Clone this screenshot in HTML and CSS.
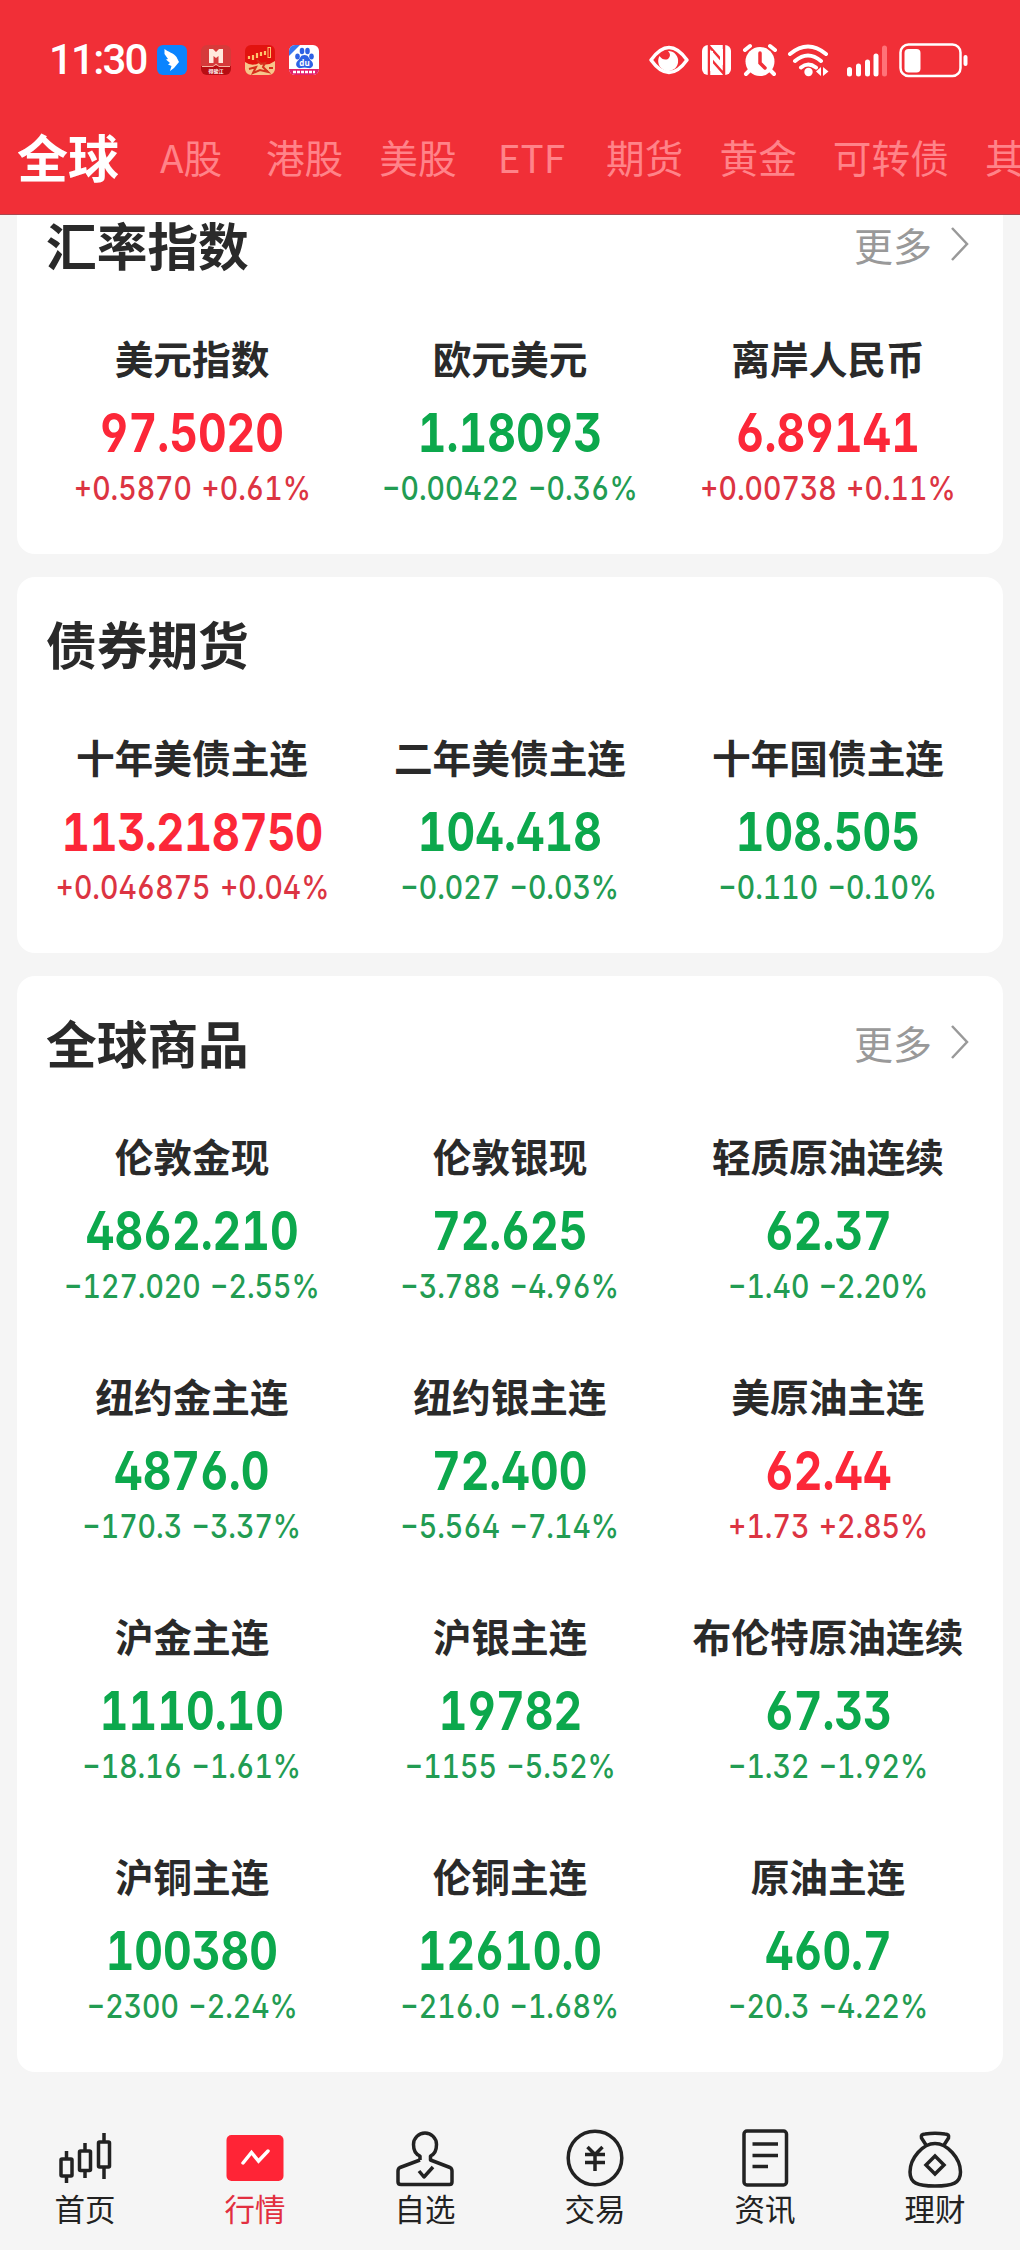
FILE: index.html
```html
<!DOCTYPE html>
<html lang="zh-CN">
<head>
<meta charset="utf-8">
<title>行情</title>
<link rel="stylesheet" href="styles.css">
</head>
<body>
<div class="app">
<header class="top">
  <div class="status">
    <span class="clock">11:30</span>
    <div class="apps">
      <svg width="30" height="30" viewBox="0 0 30 30"><rect width="30" height="30" rx="6" fill="#0a84ff"/><path d="M7.500 4C11 7 17 8 19.500 12L22 17L17 23L13 26L14.500 21L11 19.500L13 18L9 14.500L11 14L7.500 9Z" fill="#fff"/></svg>
      <svg width="30" height="30" viewBox="0 0 30 30"><rect width="30" height="30" rx="6" fill="#d63a3a"/><path d="M0 21H30V24A6 6 0 0 1 24 30H6A6 6 0 0 1 0 24Z" fill="#b80d12"/><path d="M8 4H12L15 7L18 4H22V18H17.500V11L15 13L12.500 11V18H8Z" fill="#ffe9dc"/><path d="M1 21.500H12L15 19L18 21.500H29" stroke="#f6b4a0" fill="none"/><text x="15" y="28.300" class="app-text">得骏江</text></svg>
      <svg width="30" height="30" viewBox="0 0 30 30"><rect width="30" height="30" rx="6" fill="#e2130f"/><path d="M0 17Q7 22 14 18Q22 22 30 16V24A6 6 0 0 1 24 30H6A6 6 0 0 1 0 24Z" fill="#f7c58b"/><path d="M4 14V11M8 15V10M12 13V8M16 11V7M20 10V6" stroke="#ffc36c" stroke-width="2.200"/><rect x="23" y="2.500" width="2.500" height="10" fill="none" stroke="#ffc36c"/><path d="M12 15L16 19L20 18L18 22L23 27L15 25L8 28L11 22L4 24M24 23H28" stroke="#d6301d" stroke-width="2" fill="none"/></svg>
      <svg width="30" height="30" viewBox="0 0 30 30"><rect width="30" height="30" rx="6" fill="#fff"/><path d="M0 11V6A6 6 0 0 1 6 0H11Z" fill="#3978ef"/><path d="M0 24H30A6 6 0 0 1 24 30H6A6 6 0 0 1 0 24Z" fill="#e3216b"/><g fill="#2e62e4"><ellipse cx="8.500" cy="11.500" rx="2.300" ry="3"/><ellipse cx="13" cy="6" rx="2.300" ry="3.200"/><ellipse cx="18.500" cy="6" rx="2.300" ry="3.200"/><ellipse cx="22.500" cy="11.500" rx="2.300" ry="3"/><path d="M15.500 10C11 10 12 13 8.500 16C5 20 9 24 12 23Q15.500 22 19 23C23 24 26 20 22.500 16C19 13 20 10 15.500 10Z"/></g><text x="15.500" y="21" class="du-text">du</text><path d="M4 27H26" stroke="#fff" stroke-width="2.500" stroke-dasharray="3 1"/></svg>
    </div>
    <div class="signals">
      <svg width="344" height="36" viewBox="0 0 344 36" fill="none" stroke="#fff">
        <path d="M2 18Q20-7 38 18Q20 43 2 18Z" transform="translate(1 0)" stroke-width="3.500" stroke-linejoin="round"/>
        <path d="M20 9A10 10 0 1 1 11.500 14Q15 19 20 17Q24 13 20 9Z" fill="#fff" stroke="none"/>
        <rect x="54" y="3" width="29" height="30" rx="6" fill="#fff" stroke="none"/>
        <path d="M61 33V3M76 33V3M61 4L76 21M61 15L76 32" stroke="#f12f37" stroke-width="2.500"/><path d="M63.500 9V29M73.500 7V23" stroke="#fff" stroke-width="3"/>
        <circle cx="112" cy="19.500" r="14.500" fill="#fff" stroke="none"/>
        <path d="M97 8L102 4M127 8L122 4M98 32L102 28M126 32L122 28" stroke-width="4" stroke-linecap="round"/>
        <path d="M112 11V21L117 26" stroke="#f12f37" stroke-width="3.500" stroke-linecap="round"/>
        <path d="M142 12Q160-3 178 12M147 19Q160 8 173 19M153 25.500Q160 19.500 168 25.500" stroke-width="4" stroke-linecap="round"/>
        <circle cx="160.500" cy="30" r="4.200" fill="#fff" stroke="none"/><path d="M173 25V34L168 29.500ZM175 25V34L180.500 29.500Z" fill="#fff" stroke="none"/>
        <path d="M201.500 27.500V32M210.500 24V32M219.500 20V32M228 14V32" stroke-width="5" stroke-linecap="round"/><path d="M236.500 6V32" stroke="#ff7278" stroke-width="5" stroke-linecap="round"/>
        <rect x="252.500" y="2.500" width="60" height="31.500" rx="8" stroke-width="2.500"/>
        <rect x="256.500" y="7" width="16" height="23.500" rx="4" fill="#fff" stroke="none"/><path d="M317.500 15V22" stroke-width="4" stroke-linecap="round"/>
      </svg>
    </div>
  </div>
  <nav class="tabs">
    <span class="tab active">全球</span><span class="tab">A股</span><span class="tab">港股</span><span class="tab">美股</span><span class="tab">ETF</span><span class="tab">期货</span><span class="tab">黄金</span><span class="tab">可转债</span><span class="tab">其他</span>
  </nav>
</header>
<main class="content">
  <section class="card scrolled">
    <div class="head"><h2>汇率指数</h2><span class="more">更多<svg width="20" height="36" viewBox="0 0 20 36"><path d="M2 2L17 18L2 34" fill="none" stroke="#999" stroke-width="2.500"/></svg></span></div>
    <div class="grid">
      <div class="quote up"><h3>美元指数</h3><b>97.5020</b><p>+0.5870 +0.61%</p></div>
      <div class="quote down"><h3>欧元美元</h3><b>1.18093</b><p>−0.00422 −0.36%</p></div>
      <div class="quote up"><h3>离岸人民币</h3><b>6.89141</b><p>+0.00738 +0.11%</p></div>
    </div>
  </section>
  <section class="card">
    <div class="head"><h2>债券期货</h2></div>
    <div class="grid">
      <div class="quote up"><h3>十年美债主连</h3><b class="long">113.218750</b><p>+0.046875 +0.04%</p></div>
      <div class="quote down"><h3>二年美债主连</h3><b>104.418</b><p>−0.027 −0.03%</p></div>
      <div class="quote down"><h3>十年国债主连</h3><b>108.505</b><p>−0.110 −0.10%</p></div>
    </div>
  </section>
  <section class="card">
    <div class="head"><h2>全球商品</h2><span class="more">更多<svg width="20" height="36" viewBox="0 0 20 36"><path d="M2 2L17 18L2 34" fill="none" stroke="#999" stroke-width="2.500"/></svg></span></div>
    <div class="grid">
      <div class="quote down"><h3>伦敦金现</h3><b>4862.210</b><p>−127.020 −2.55%</p></div>
      <div class="quote down"><h3>伦敦银现</h3><b>72.625</b><p>−3.788 −4.96%</p></div>
      <div class="quote down"><h3>轻质原油连续</h3><b>62.37</b><p>−1.40 −2.20%</p></div>
      <div class="quote down"><h3>纽约金主连</h3><b>4876.0</b><p>−170.3 −3.37%</p></div>
      <div class="quote down"><h3>纽约银主连</h3><b>72.400</b><p>−5.564 −7.14%</p></div>
      <div class="quote up"><h3>美原油主连</h3><b>62.44</b><p>+1.73 +2.85%</p></div>
      <div class="quote down"><h3>沪金主连</h3><b>1110.10</b><p>−18.16 −1.61%</p></div>
      <div class="quote down"><h3>沪银主连</h3><b>19782</b><p>−1155 −5.52%</p></div>
      <div class="quote down"><h3>布伦特原油连续</h3><b>67.33</b><p>−1.32 −1.92%</p></div>
      <div class="quote down"><h3>沪铜主连</h3><b>100380</b><p>−2300 −2.24%</p></div>
      <div class="quote down"><h3>伦铜主连</h3><b>12610.0</b><p>−216.0 −1.68%</p></div>
      <div class="quote down"><h3>原油主连</h3><b>460.7</b><p>−20.3 −4.22%</p></div>
    </div>
  </section>
</main>
<nav class="bottom">
  <div class="item"><svg viewBox="0 0 60 60"><path d="M11.500 23V31M11.500 48V55M30 15V23M30 43V50M49 5V14M49 39V51"/><rect x="6" y="31" width="11" height="17" rx="1"/><rect x="24.500" y="23" width="11" height="19.500" rx="1"/><rect x="43.500" y="14" width="11" height="25" rx="1"/></svg>首页</div>
  <div class="item active"><svg viewBox="0 0 60 60"><rect x="1.500" y="7" width="57" height="46" rx="5" fill="#ff2436" stroke="none"/><path d="M18 35L26.500 24.500L33.500 33L43 23" stroke="#fff" stroke-linecap="round"/></svg>行情</div>
  <div class="item"><svg viewBox="0 0 60 60"><path d="M25 32V28C20 26 18.500 21 18.500 16.500A11.500 11.500 0 0 1 41.500 16.500C41.500 21 40 26 35.500 28V32L55 39.500Q57 40.500 57 43V54Q57 56.500 54.500 56.500H6Q3 56.500 3 54V43Q3 40.500 5 39.500L25 32M24 43L29 49L38 39" stroke-linejoin="round"/></svg>自选</div>
  <div class="item"><svg viewBox="0 0 60 60"><circle cx="30" cy="30" r="26.800"/><path d="M22.500 19L30 26.500L37.500 19M20 26.500H40M20 34.500H40M30 26V43"/></svg>交易</div>
  <div class="item"><svg viewBox="0 0 60 60"><rect x="9" y="3" width="42.500" height="54" rx="3"/><path d="M17.500 16H43M17.500 27.500H43M17.500 38.500H33"/></svg>资讯</div>
  <div class="item"><svg viewBox="0 0 60 60"><path d="M21 17L16.500 10Q15.500 6 20 6Q30 4.500 40 6Q44.500 6 43.500 10L39 17M30 15.500C42 15.500 55.500 30 55.500 44C55.500 55 48 58 30 58C12 58 5 55 5 44C5 30 18 15.500 30 15.500ZM30 28L39 37L30 46L21 37Z"/></svg>理财</div>
</nav>
</div>
</body>
</html>
```
FILE: styles.css
```css
* { box-sizing: border-box; }
body { margin: 0; background: #f5f5f5; color: #2a2a2a; font-family: "Noto Sans CJK SC", sans-serif; }
h2, h3, p { margin: 0; }
svg { display: block; flex: none; }
.app { width: 1020px; height: 2250px; display: flex; flex-direction: column; overflow: hidden; }

.top { flex: none; height: 215px; background: #f12f37; border-bottom: 1px solid #a9474f; color: #fff; overflow: hidden; }
.status { height: 120px; padding: 0 45px 0 49px; display: flex; align-items: center; }
.clock { font: 500 42px/60px Roboto, sans-serif; letter-spacing: -1.800px; width: 108px; }
.apps { display: flex; gap: 14px; }
.app-text { font-size: 5px; font-weight: 700; fill: #fff; text-anchor: middle; }
.du-text { font: 700 8px "Open Sans", sans-serif; fill: #fff; text-anchor: middle; }
.signals { margin-left: auto; width: 327px; }
.tabs { display: flex; gap: 36px; padding-left: 17px; height: 72px; align-items: center; white-space: nowrap; }
.tab { min-width: 77.400px; flex: none; text-align: center; font-size: 38.700px; line-height: 72px; color: #ff8389; }
.tab.active { font-size: 51px; font-weight: 700; color: #fff; width: 102px; margin-right: -2.500px; }

.content { flex: none; height: 1893px; overflow: hidden; padding: 0 17px; display: flex; flex-direction: column; gap: 23px; }
.card { flex: none; background: #fff; border-radius: 18px; padding: 0 16px; }
.card.scrolled { margin-top: -37px; }
.head { height: 136px; padding: 0 17px 5px 13px; display: flex; align-items: center; justify-content: space-between; }
.head h2 { font-size: 50.700px; font-weight: 700; line-height: 80px; }
.more { display: flex; align-items: center; gap: 18px; font-size: 39px; line-height: 60px; color: #999; }
.grid { display: grid; grid-template-columns: repeat(3, 1fr); grid-auto-rows: 240px; }
.quote { display: flex; flex-direction: column; align-items: center; padding-top: 13px; white-space: nowrap; }
.quote h3 { font-size: 38.700px; font-weight: 700; line-height: 60px; }
.quote b, .quote p { font-family: Inter, Roboto, sans-serif; font-feature-settings: "tnum", "ss01", "cv03", "cv04"; }
.quote b { font-size: 53.500px; font-weight: 700; line-height: 60px; margin-top: 16px; transform: scaleX(.83); }
.quote b.long { font-size: 52.500px; letter-spacing: -.500px; }
.quote p { font-size: 32.700px; font-weight: 500; line-height: 40px; margin-top: 5px; word-spacing: 2px; transform: scaleX(.87); }
.up b { color: #fc2738; }
.down b { color: #0ca84c; }
.up p { color: #dc3442; }
.down p { color: #229c52; }

.bottom { flex: none; height: 142px; display: grid; grid-template-columns: repeat(6, 1fr); }
.item { display: flex; flex-direction: column; align-items: center; padding-top: 20px; font-size: 30.500px; line-height: 40px; color: #222; }
.item svg { width: 60px; height: 60px; fill: none; stroke: #222; stroke-width: 3.500; }
.item.active { color: #e22f40; }
```
